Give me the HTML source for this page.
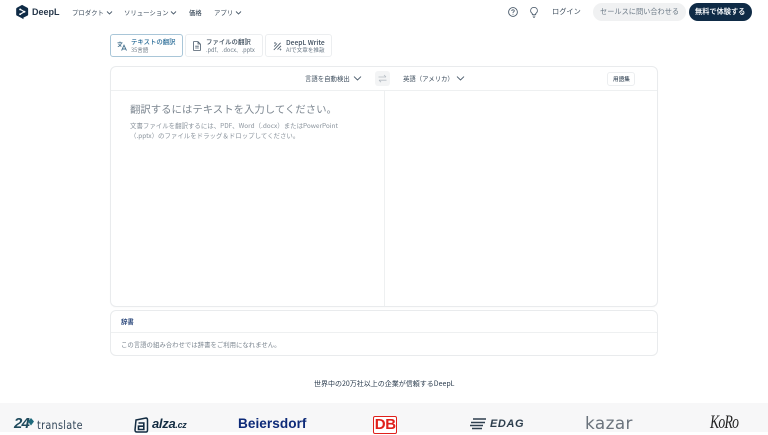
<!DOCTYPE html>
<html lang="ja"><head><meta charset="utf-8"><title>DeepL</title>
<style>
html,body{margin:0;padding:0;background:#fff}
body{width:768px;height:432px;overflow:hidden;position:relative;font-family:"Noto Sans CJK JP","Liberation Sans",sans-serif;color:#2a3b4d}
.t{position:absolute;white-space:nowrap;line-height:10px}
.l{position:absolute;white-space:nowrap;line-height:1.2;font-family:"Liberation Sans",sans-serif}
.b{position:absolute;box-sizing:border-box}
svg{position:absolute;overflow:visible}
.ch{fill:none;stroke:#4a5a6a;stroke-width:.9}
</style></head><body>
<!-- logo -->
<svg style="left:16px;top:4px" width="13" height="16" viewBox="0 0 15 17"><path d="M7 0.3 L13.2 3.6 Q14 4 14 5 V11.5 Q14 12.3 13.2 12.7 L8.6 15 L8.6 16.8 L6.6 15.6 L1 12.7 Q0.2 12.3 0.2 11.5 V5 Q0.2 4 1 3.6 Z" fill="#0f2b46"/><path d="M5 5.5 L9.6 8.2 L5 11" fill="none" stroke="#fff" stroke-width="1.3"/><circle cx="4.8" cy="5.5" r="1.1" fill="#fff"/><circle cx="4.8" cy="11" r="1.1" fill="#fff"/><circle cx="9.8" cy="8.2" r="1.1" fill="#fff"/></svg>
<div class="l" style="left:32px;top:6.5px;font-size:9px;font-weight:700;color:#26374a;line-height:11px">DeepL</div>
<!-- nav -->
<div class="t" style="left:72px;top:8px;font-size:6.4px;color:#3a4a5a">プロダクト</div>
<svg style="left:107px;top:10.5px" width="5" height="4"><path class="ch" d="M0 0.5 L2.5 3 L5 0.5"/></svg>
<div class="t" style="left:124px;top:8px;font-size:6.4px;color:#3a4a5a">ソリューション</div>
<svg style="left:171px;top:10.5px" width="5" height="4"><path class="ch" d="M0 0.5 L2.5 3 L5 0.5"/></svg>
<div class="t" style="left:189px;top:8px;font-size:6.4px;color:#3a4a5a;font-weight:500">価格</div>
<div class="t" style="left:214px;top:8px;font-size:6.4px;color:#3a4a5a">アプリ</div>
<svg style="left:236px;top:10.5px" width="5" height="4"><path class="ch" d="M0 0.5 L2.5 3 L5 0.5"/></svg>
<!-- right nav -->
<svg style="left:508px;top:7px" width="10" height="10"><circle cx="5" cy="5" r="4.4" fill="none" stroke="#4a5a6a" stroke-width=".9"/><path d="M3.7 4 Q3.8 2.8 5 2.8 Q6.3 2.8 6.3 3.9 Q6.3 4.6 5.4 5 Q5 5.3 5 6" fill="none" stroke="#4a5a6a" stroke-width=".8"/><circle cx="5" cy="7.3" r=".5" fill="#4a5a6a"/></svg>
<svg style="left:530px;top:7px" width="8" height="11"><path d="M2.3 6.6 Q.5 5.3 .6 3.6 Q.8 .5 4 .4 Q7.2 .5 7.4 3.6 Q7.5 5.3 5.7 6.6 V7.6 H2.3 Z M2.6 9 H5.4 M3.2 10.3 H4.8" fill="none" stroke="#4a5a6a" stroke-width=".8"/></svg>
<div class="t" style="left:552px;top:7px;font-size:7.2px;color:#3a4a5a">ログイン</div>
<div class="b" style="left:593px;top:3px;width:93px;height:18px;border-radius:9px;background:#f0f1f2"></div>
<div class="t" style="left:600px;top:7px;font-size:7.2px;color:#6b7986">セールスに問い合わせる</div>
<div class="b" style="left:689px;top:3px;width:63px;height:18px;border-radius:9px;background:#0f2b46"></div>
<div class="t" style="left:695px;top:7px;font-size:7.2px;font-weight:700;color:#f0f3f6">無料で体験する</div>
<!-- tabs -->
<div class="b" style="left:110px;top:34px;width:73px;height:23px;border:1px solid #a9c6d8;border-radius:3px;background:#fff"></div>
<svg style="left:117px;top:41px" width="10" height="10"><path d="M.5 1.8 H5.5 M3 .5 V1.8 M4.6 1.8 Q4 4.4 .8 5.8 M1.6 3 Q2.6 4.8 4.4 5.4" fill="none" stroke="#44708d" stroke-width=".8"/><path d="M4.6 9.6 L7 4.2 L9.5 9.6 M5.4 8 H8.6" fill="none" stroke="#44708d" stroke-width=".9"/></svg>
<div class="t" style="left:131px;top:36.5px;font-size:6.4px;color:#2b6d98;font-weight:500">テキストの翻訳</div>
<div class="t" style="left:131px;top:44.5px;font-size:5.6px;color:#6d7b88">35言語</div>
<div class="b" style="left:185px;top:34px;width:78px;height:23px;border:1px solid #eceef0;border-radius:3px"></div>
<svg style="left:193px;top:41px" width="8" height="10"><path d="M.6 .6 H5 L7.4 3 V9.4 H.6 Z M5 .6 V3 H7.4 M2.2 5.2 H5.8 M2.2 7 H5.8" fill="none" stroke="#4a5a6a" stroke-width=".8"/></svg>
<div class="t" style="left:206px;top:36.5px;font-size:6.4px;color:#3a4a5a;font-weight:500">ファイルの翻訳</div>
<div class="t" style="left:206px;top:44.5px;font-size:5.6px;color:#6d7b88">.pdf、.docx、.pptx</div>
<div class="b" style="left:265px;top:34px;width:67px;height:23px;border:1px solid #eceef0;border-radius:3px"></div>
<svg style="left:273px;top:41px" width="9" height="10"><path d="M.8 9 L7.6 1.8 M1.2 5.5 L4 2.5 M4.5 8.5 L8 4.8" fill="none" stroke="#4a5a6a" stroke-width=".9"/><path d="M2 1 V3 M1 2 H3 M7.5 7.5 V9.5 M6.5 8.5 H8.5" fill="none" stroke="#4a5a6a" stroke-width=".6"/></svg>
<div class="t" style="left:286px;top:36.5px;font-size:6.7px;color:#3a4a5a;font-weight:500">DeepL Write</div>
<div class="t" style="left:286px;top:44.5px;font-size:5.6px;color:#6d7b88">AIで文章を推敲</div>
<!-- translator card -->
<div class="b" style="left:110px;top:66px;width:548px;height:241px;border:1px solid #e9ebed;border-radius:6px;box-shadow:0 1px 1px rgba(0,0,0,.02)"></div>
<div class="b" style="left:111px;top:90px;width:546px;height:1px;background:#eef0f1"></div>
<div class="b" style="left:384px;top:90px;width:1px;height:216px;background:#eef0f1"></div>
<div class="t" style="left:305px;top:73.5px;font-size:6.4px;color:#3a4a5a">言語を自動検出</div>
<svg style="left:354px;top:76px" width="7" height="5"><path class="ch" d="M0 .6 L3.5 4 L7 .6"/></svg>
<div class="b" style="left:375px;top:71px;width:15px;height:15px;border-radius:3px;background:#f3f4f5"></div>
<svg style="left:378px;top:74px" width="9" height="9"><path d="M.5 3 H8 M6 1 L8 3 M8.5 6.2 H1 M3 8.2 L1 6.2" fill="none" stroke="#b5bcc3" stroke-width=".8"/></svg>
<div class="t" style="left:403px;top:73.5px;font-size:6.4px;color:#3a4a5a">英語（アメリカ）</div>
<svg style="left:457px;top:76px" width="7" height="5"><path class="ch" d="M0 .6 L3.5 4 L7 .6"/></svg>
<div class="b" style="left:607px;top:72px;width:28px;height:14px;border:1px solid #eceef0;border-radius:3px"></div>
<div class="t" style="left:613px;top:73.5px;font-size:5.6px;color:#3a4a5a;font-weight:500">用語集</div>
<div class="t" style="left:130px;top:102px;line-height:14px;font-size:10.4px;color:#7d8791">翻訳するにはテキストを入力してください。</div>
<div class="t" style="left:130px;top:121px;font-size:6.45px;color:#8a939c">文書ファイルを翻訳するには、PDF、Word（.docx）またはPowerPoint</div>
<div class="t" style="left:130px;top:130.5px;font-size:6.45px;color:#8a939c">（.pptx）のファイルをドラッグ＆ドロップしてください。</div>
<!-- dictionary -->
<div class="b" style="left:110px;top:310px;width:548px;height:46px;border:1px solid #e9ebed;border-radius:6px"></div>
<div class="b" style="left:111px;top:332px;width:546px;height:1px;background:#eef0f1"></div>
<div class="t" style="left:121px;top:317px;font-size:6.4px;font-weight:700;color:#2e4a7d">辞書</div>
<div class="t" style="left:121px;top:340px;font-size:6.4px;color:#7d8791">この言語の組み合わせでは辞書をご利用になれません。</div>
<!-- trusted -->
<div class="t" style="left:314px;top:379px;font-size:7px;color:#2a3b4d">世界中の20万社以上の企業が信頼するDeepL</div>
<div class="b" style="left:0;top:403px;width:768px;height:29px;background:#f7f7f8"></div>
<!-- logos -->
<div class="l" style="left:14px;top:415px;font-size:15px;font-weight:700;font-style:italic;color:#1f4a5c;letter-spacing:-.8px">24</div>
<svg style="left:28px;top:418px" width="6" height="8"><path d="M3 0 L6 3.5 L3 7.5 L0 3.5 Z" fill="#1f6a7c"/></svg>
<div class="l" style="left:37px;top:419px;font-size:11.5px;color:#33475a;letter-spacing:.35px;font-family:'DejaVu Sans',sans-serif;transform-origin:left;transform:scaleX(.84)">translate</div>
<svg style="left:134px;top:417px" width="14" height="15"><path d="M2 3 L12 1 Q13.5 1 13.5 3 V13 Q13.5 15 12 15 H3 Q1 15 1 13 Z" fill="none" stroke="#132c42" stroke-width="1.5"/><path d="M4.5 6 H9.8 V12.5 H4.5 V9.2 H9.5" fill="none" stroke="#132c42" stroke-width="1.6"/></svg>
<div class="l" style="left:152px;top:416px;font-size:13px;font-weight:700;font-style:italic;color:#132c42;letter-spacing:-.3px">alza<span style="font-size:9px">.cz</span></div>
<div class="l" style="left:238px;top:416px;font-size:13.6px;font-weight:700;color:#0d2a78;letter-spacing:.05px">Beiersdorf</div>
<div class="b" style="left:373px;top:416px;width:24px;height:18px;border:1.4px solid #e0201b;border-radius:2px;background:#fff"></div>
<div class="l" style="left:374.7px;top:416px;font-size:15px;font-weight:700;color:#e0201b;letter-spacing:-.3px">DB</div>
<svg style="left:470px;top:417px" width="17" height="15"><path d="M3 2 H16 M1 5.5 H15 M4 5.5 H14 M0 8.5 H13 M2 11.5 H12" fill="none" stroke="#2e3f4e" stroke-width="1.4"/></svg>
<div class="l" style="left:490px;top:418px;font-size:11px;font-weight:700;font-style:italic;color:#2e3f4e;letter-spacing:.6px">EDAG</div>
<div class="l" style="left:585px;top:414px;font-size:16.5px;color:#6a737c;letter-spacing:.4px;font-family:'DejaVu Sans',sans-serif;font-weight:400;transform-origin:left;transform:scaleX(1.02)">kazar</div>
<div class="l" style="left:710px;top:412px;font-size:19px;color:#222;font-family:'Liberation Serif',serif;letter-spacing:-1px;font-style:italic;transform-origin:left;transform:scaleX(.72)">KoRo</div>
</body></html>
